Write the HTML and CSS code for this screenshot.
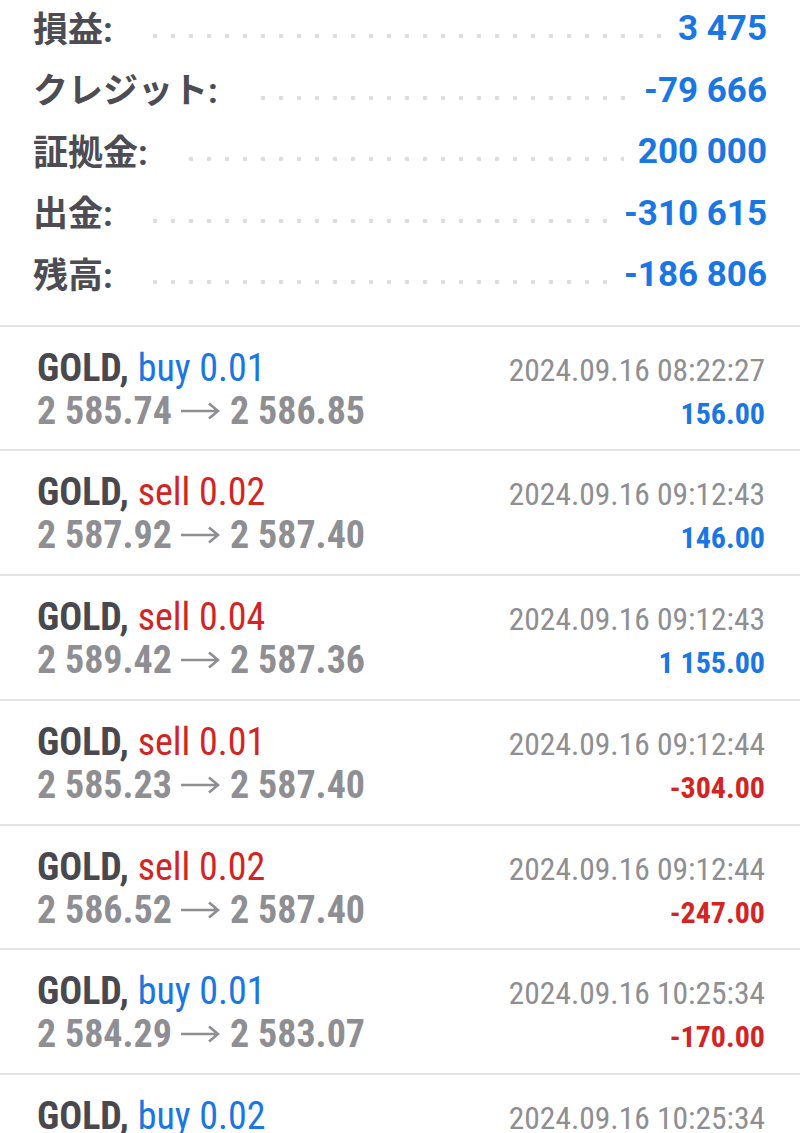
FILE: index.html
```html
<!DOCTYPE html>
<html lang="ja">
<head>
	<meta charset="UTF-8">
	<title>履歴</title>
	<link rel="stylesheet" href="styles.css">
</head>
<body>

	<!-- 合計 -->
	<div class="summary">
		<div class="sum-row"><span class="sum-label">損益:</span><span class="sum-value">3 475</span></div>
		<div class="sum-row"><span class="sum-label">クレジット:</span><span class="sum-value">-79 666</span></div>
		<div class="sum-row"><span class="sum-label">証拠金:</span><span class="sum-value">200 000</span></div>
		<div class="sum-row"><span class="sum-label">出金:</span><span class="sum-value">-310 615</span></div>
		<div class="sum-row"><span class="sum-label">残高:</span><span class="sum-value">-186 806</span></div>
	</div>

	<!-- 取引 -->
	<ul class="trades">
		<li class="trade">
			<div class="trade-title">GOLD, <span class="buy">buy 0.01</span></div>
			<div class="trade-time">2024.09.16 08:22:27</div>
			<div class="trade-price">2 585.74<svg class="arrow" viewBox="0 0 40 20"><path d="M1 10H38M29 2.5L38 10L29 17.5"/></svg>2 586.85</div>
			<div class="trade-profit">156.00</div>
		</li>
		<li class="trade">
			<div class="trade-title">GOLD, <span class="sell">sell 0.02</span></div>
			<div class="trade-time">2024.09.16 09:12:43</div>
			<div class="trade-price">2 587.92<svg class="arrow" viewBox="0 0 40 20"><path d="M1 10H38M29 2.5L38 10L29 17.5"/></svg>2 587.40</div>
			<div class="trade-profit">146.00</div>
		</li>
		<li class="trade">
			<div class="trade-title">GOLD, <span class="sell">sell 0.04</span></div>
			<div class="trade-time">2024.09.16 09:12:43</div>
			<div class="trade-price">2 589.42<svg class="arrow" viewBox="0 0 40 20"><path d="M1 10H38M29 2.5L38 10L29 17.5"/></svg>2 587.36</div>
			<div class="trade-profit">1 155.00</div>
		</li>
		<li class="trade">
			<div class="trade-title">GOLD, <span class="sell">sell 0.01</span></div>
			<div class="trade-time">2024.09.16 09:12:44</div>
			<div class="trade-price">2 585.23<svg class="arrow" viewBox="0 0 40 20"><path d="M1 10H38M29 2.5L38 10L29 17.5"/></svg>2 587.40</div>
			<div class="trade-profit loss">-304.00</div>
		</li>
		<li class="trade">
			<div class="trade-title">GOLD, <span class="sell">sell 0.02</span></div>
			<div class="trade-time">2024.09.16 09:12:44</div>
			<div class="trade-price">2 586.52<svg class="arrow" viewBox="0 0 40 20"><path d="M1 10H38M29 2.5L38 10L29 17.5"/></svg>2 587.40</div>
			<div class="trade-profit loss">-247.00</div>
		</li>
		<li class="trade">
			<div class="trade-title">GOLD, <span class="buy">buy 0.01</span></div>
			<div class="trade-time">2024.09.16 10:25:34</div>
			<div class="trade-price">2 584.29<svg class="arrow" viewBox="0 0 40 20"><path d="M1 10H38M29 2.5L38 10L29 17.5"/></svg>2 583.07</div>
			<div class="trade-profit loss">-170.00</div>
		</li>
		<li class="trade">
			<div class="trade-title">GOLD, <span class="buy">buy 0.02</span></div>
			<div class="trade-time">2024.09.16 10:25:34</div>
		</li>
	</ul>

</body>
</html>
```
FILE: styles.css
```css
*{margin: 0;padding: 0;}
li{list-style: none;}
html,body{background-color: #fff;overflow: hidden;}
body{font-family: Roboto, "Noto Sans CJK JP", sans-serif;color: #4a4a50;}

/* 合計 */
.summary{padding: 0 33px 19px;margin-top: -2px;}
.sum-row{height: 61.5px;display: flex;align-items: center;justify-content: space-between;font-size: 35px;
	background: radial-gradient(circle, #dcdcdc 2px, transparent 2.6px) 5px 35px / 18px 6px repeat-x;}
.sum-label{background-color: #fff;padding: 0 30px 5px 0;font-weight: 700;color: #4c4c52;}
.sum-value{background-color: #fff;padding-left: 14px;font-weight: 700;color: #1976e2;}

/* 取引 */
.trades{font-family: "Roboto Condensed", Roboto, sans-serif;}
.trade{border-top: 2px solid #e3e3e3;padding: 20px 35px 16.8px 37px;display: grid;grid-template-columns: 1fr auto;grid-auto-rows: 43px;align-items: baseline;line-height: 43px;}
.trade-title{font-size: 38px;font-weight: 700;color: #48484e;}
.trade-title span{font-weight: 400;}
.buy{color: #1976e2;}
.sell{color: #d32424;}
.trade-time{font-size: 31.5px;color: #8e8e93;text-align: right;}
.trade-price{font-size: 38px;font-weight: 700;color: #8e8e93;}
.arrow{width: 40px;height: 20px;margin: 0 10px 0 8px;vertical-align: 3px;fill: none;stroke: #8e8e93;stroke-width: 2.6;}
.trade-profit{font-size: 30px;font-weight: 700;color: #1976e2;text-align: right;}
.trade-profit.loss{color: #d32424;}
```
